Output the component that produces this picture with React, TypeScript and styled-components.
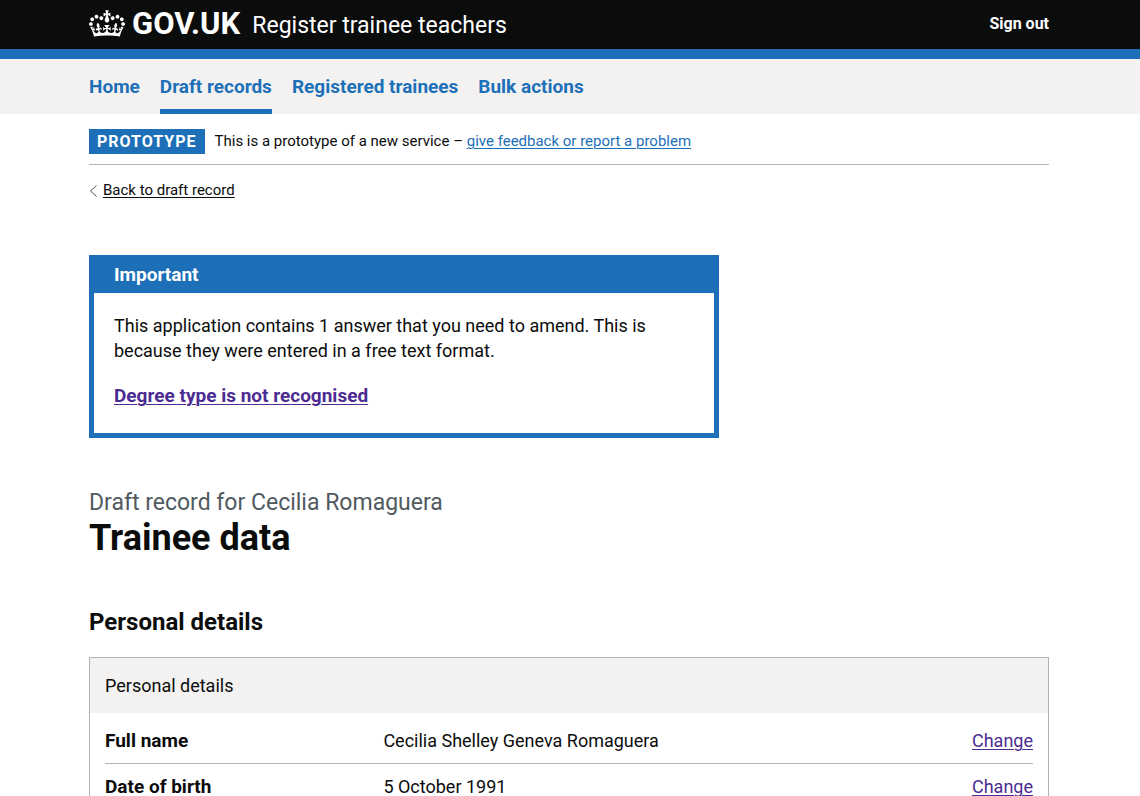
import React from "react";
import styled, { createGlobalStyle } from "styled-components";

const blue = "#1d70b8";
const ink = "#0b0c0c";
const visited = "#4c2c92";
const pale = "#f3f2f1";
const line = "#b1b4b6";

const GlobalStyle = createGlobalStyle`
  *, *::before, *::after { box-sizing: border-box; }
  body {
    margin: 0;
    background: #fff;
    color: ${ink};
    font-family: Roboto, "Noto Sans", sans-serif;
    font-size: 18px;
    line-height: 25px;
  }
  h1, h2, h3, p, ul, dl, dd, dt { margin: 0; padding: 0; }
`;

const Bar = styled.div<{ $bg?: string }>`
  padding: 0 32px 0 30px;
  background: ${(p) => p.$bg || "transparent"};
`;

const Container = styled.div`
  max-width: 960px;
  margin: 0 auto;
`;

const Masthead = styled.header`
  background: ${ink};
  border-bottom: 10px solid ${blue};
`;

const MastheadRow = styled(Container)`
  display: flex;
  align-items: center;
  height: 49px;
  padding-bottom: 2px;
`;

const LogoLink = styled.a`
  display: flex;
  align-items: center;
  color: #fff;
  text-decoration: none;
  font-size: 31px;
  font-weight: 700;
  line-height: 30px;
`;

const Crown = styled.svg`
  width: 36px;
  height: 27px;
  margin-right: 7px;
`;

const ServiceLink = styled.a`
  margin: 4px auto 0 12px;
  color: #fff;
  font-size: 23px;
  line-height: 30px;
  text-decoration: none;
`;

const SignOut = styled.a`
  color: #fff;
  font-size: 16px;
  font-weight: 700;
  text-decoration: none;
`;

const NavList = styled.ul`
  display: flex;
  gap: 20px;
  list-style: none;
`;

const NavLink = styled.a<{ $current?: boolean }>`
  display: block;
  padding: 15px 0 10px;
  border-bottom: 5px solid ${(p) => (p.$current ? blue : "transparent")};
  color: ${blue};
  font-size: 19px;
  font-weight: 700;
  text-decoration: none;
`;

const PhaseBanner = styled.div`
  display: flex;
  align-items: center;
  padding: 15px 0 10px;
  border-bottom: 1px solid ${line};
  font-size: 15px;
`;

const Tag = styled.strong`
  margin-right: 10px;
  padding: 0 8px;
  background: ${blue};
  color: #fff;
  font-size: 16px;
  letter-spacing: 1px;
`;

const Link = styled.a<{ $color?: string }>`
  color: ${(p) => p.$color || blue};
  text-decoration: underline;
  text-decoration-thickness: 1px;
  text-underline-offset: 2px;
`;

const BackRow = styled.div`
  display: flex;
  align-items: center;
  gap: 5px;
  margin-top: 13px;
  font-size: 15px;
`;

const Chevron = styled.svg`
  width: 9px;
  height: 12px;
`;

const Notice = styled.section`
  max-width: 630px;
  margin-top: 52px;
  border: 5px solid ${blue};
`;

const NoticeTitle = styled.h2`
  padding: 2px 20px 6px;
  background: ${blue};
  color: #fff;
  font-size: 19px;
  line-height: 25px;
`;

const NoticeBody = styled.div`
  display: grid;
  gap: 20px;
  padding: 20px 20px 25px;
`;

const NoticeIssue = styled.p`
  font-size: 19px;
  font-weight: 700;
`;

const Caption = styled.span`
  display: block;
  color: #505a5f;
  font-size: 23px;
  font-weight: 400;
  line-height: 30px;
`;

const Title = styled.h1`
  margin-top: 50px;
  font-size: 36px;
  line-height: 40px;
`;

const SectionTitle = styled.h2`
  margin: 49px 0 20px;
  font-size: 24px;
  line-height: 30px;
`;

const Card = styled.section`
  border: 1px solid ${line};
`;

const CardTitle = styled.h3`
  padding: 15px;
  background: ${pale};
  font-size: 18px;
  font-weight: 400;
  line-height: 25px;
`;

const SummaryList = styled.dl`
  padding: 5px 15px;
`;

const SummaryRow = styled.div`
  display: grid;
  grid-template-columns: 30% 50% 20%;
  padding: 10px 0;
  border-bottom: 1px solid ${line};
`;

const Key = styled.dt`
  font-size: 19px;
  font-weight: 700;
`;

const Action = styled.dd`
  text-align: right;
`;

const nav = ["Home", "Draft records", "Registered trainees", "Bulk actions"];

const details = [
  { key: "Full name", value: "Cecilia Shelley Geneva Romaguera" },
  { key: "Date of birth", value: "5 October 1991" },
];

const crownPath =
  "M25 30.2c3.5 1.5 7.7-.2 9.1-3.7 1.5-3.6-.2-7.8-3.9-9.2-3.6-1.4-7.6.3-9.1 3.9-1.4 3.5.3 7.5 3.9 9zM9 39.5c3.6 1.5 7.8-.2 9.2-3.7 1.5-3.6-.2-7.8-3.9-9.1-3.6-1.5-7.6.2-9.1 3.8-1.4 3.5.3 7.5 3.8 9zM4.4 57.2c3.5 1.5 7.7-.2 9.1-3.8 1.5-3.6-.2-7.7-3.9-9.1-3.5-1.5-7.6.3-9.1 3.8-1.4 3.5.3 7.6 3.9 9.1zm38.3-21.4c3.5 1.5 7.7-.2 9.1-3.8 1.5-3.6-.2-7.7-3.9-9.1-3.6-1.5-7.6.3-9.1 3.8-1.3 3.6.4 7.7 3.9 9.1zm64.4-5.6c-3.6 1.5-7.8-.2-9.1-3.7-1.5-3.6.2-7.8 3.8-9.2 3.6-1.4 7.7.3 9.2 3.9 1.3 3.5-.4 7.5-3.9 9zm15.9 9.3c-3.6 1.5-7.7-.2-9.1-3.7-1.5-3.6.2-7.8 3.7-9.1 3.6-1.5 7.7.2 9.2 3.8 1.5 3.5-.3 7.5-3.8 9zm4.7 17.7c-3.6 1.5-7.8-.2-9.2-3.8-1.5-3.6.2-7.7 3.9-9.1 3.6-1.5 7.7.3 9.2 3.8 1.3 3.5-.4 7.6-3.9 9.1zM89.3 35.8c-3.6 1.5-7.8-.2-9.2-3.8-1.4-3.6.2-7.7 3.9-9.1 3.6-1.5 7.7.3 9.2 3.8 1.4 3.6-.3 7.7-3.9 9.1zM69.7 17.7l8.9 4.7V9.3l-8.9 2.8c-.2-.3-.5-.6-.9-.9L72.4 0H59.6l3.5 11.2c-.3.3-.6.5-.9.9l-8.8-2.8v13.1l8.8-4.7c.3.3.6.7.9.9l-5 15.4v.1c-.2.8-.4 1.6-.4 2.4 0 4.1 3.1 7.5 7 8.1h.2c.3 0 .7.1 1 .1.4 0 .7 0 1-.1h.2c4-.6 7.1-4.1 7.1-8.1 0-.8-.1-1.7-.4-2.4V34l-5.1-15.4c.4-.2.7-.6 1-.9zM66 92.8c16.9 0 32.8 1.1 47.1 3.2 4-16.9 8.9-26.7 14-33.5l-9.6-3.4c1 4.9 1.1 7.2 0 10.2-1.5-1.4-3-4.3-4.2-8.7L108.6 76c2.8-2 5-3.2 7.5-3.3-4.4 9.4-10 11.9-13.6 11.2-4.3-.8-6.3-4.6-5.6-7.9 1-4.7 5.7-5.9 8-.5 4.3-8.7-3-11.4-7.6-8.8 7.1-7.2 7.9-13.5 2.1-21.1-8 6.1-8.1 12.3-4.5 20.8-4.7-5.4-12.1-2.5-9.5 6.2 3.4-5.2 7.9-2 7.2 3.1-.6 4.3-6.4 7.8-13.5 7.2-10.3-.9-10.9-8-11.2-13.8 2.5-.5 7.1 1.8 11 7.3L80.2 60c-4.1 4.4-8 5.3-12.3 5.4 1.4-4.4 8-11.6 8-11.6H55.5s6.4 7.2 7.9 11.6c-4.2-.1-8-1-12.3-5.4l1.4 16.4c3.9-5.5 8.5-7.7 10.9-7.3-.3 5.8-.9 12.8-11.1 13.8-7.2.6-12.9-2.9-13.5-7.2-.7-5 3.8-8.3 7.1-3.1 2.7-8.7-4.6-11.6-9.4-6.2 3.7-8.5 3.6-14.7-4.6-20.8-5.8 7.6-5 13.9 2.2 21.1-4.7-2.6-11.9.1-7.7 8.8 2.3-5.5 7.1-4.2 8.1.5.7 3.3-1.3 7.1-5.7 7.9-3.5.7-9-1.8-13.5-11.2 2.5.1 4.7 1.3 7.5 3.3l-4.7-15.4c-1.2 4.4-2.7 7.2-4.3 8.7-1.1-3-.9-5.3 0-10.2l-9.5 3.4c5 6.9 9.9 16.7 14 33.5 14.8-2.1 30.8-3.2 47.7-3.2z";

export default function App() {
  return (
    <>
      <GlobalStyle />
      <Masthead>
        <Bar>
          <MastheadRow>
            <LogoLink href="#">
              <Crown viewBox="0 0 132 97" fill="currentColor" aria-hidden="true">
                <path fillRule="evenodd" d={crownPath} />
              </Crown>
              GOV.UK
            </LogoLink>
            <ServiceLink href="#">Register trainee teachers</ServiceLink>
            <SignOut href="#">Sign out</SignOut>
          </MastheadRow>
        </Bar>
      </Masthead>
      <Bar as="nav" $bg={pale}>
        <Container>
          <NavList>
            {nav.map((label) => (
              <li key={label}>
                <NavLink href="#" $current={label === "Draft records"}>
                  {label}
                </NavLink>
              </li>
            ))}
          </NavList>
        </Container>
      </Bar>
      <Bar>
        <Container>
          <PhaseBanner>
            <Tag>PROTOTYPE</Tag>
            <p>
              This is a prototype of a new service –{" "}
              <Link href="#">give feedback or report a problem</Link>
            </p>
          </PhaseBanner>
          <BackRow>
            <Chevron viewBox="0 0 9 12" fill="none" stroke="#505a5f" aria-hidden="true">
              <path d="M7.500 0.500L1.500 6l6 5.500" />
            </Chevron>
            <Link href="#" $color={ink}>
              Back to draft record
            </Link>
          </BackRow>
          <main>
            <Notice>
              <NoticeTitle>Important</NoticeTitle>
              <NoticeBody>
                <p>
                  This application contains 1 answer that you need to amend. This is
                  because they were entered in a free text format.
                </p>
                <NoticeIssue>
                  <Link href="#" $color={visited}>
                    Degree type is not recognised
                  </Link>
                </NoticeIssue>
              </NoticeBody>
            </Notice>
            <Title>
              <Caption>Draft record for Cecilia Romaguera</Caption>
              Trainee data
            </Title>
            <SectionTitle>Personal details</SectionTitle>
            <Card>
              <CardTitle>Personal details</CardTitle>
              <SummaryList>
                {details.map((item) => (
                  <SummaryRow key={item.key}>
                    <Key>{item.key}</Key>
                    <dd>{item.value}</dd>
                    <Action>
                      <Link href="#" $color={visited}>
                        Change
                      </Link>
                    </Action>
                  </SummaryRow>
                ))}
              </SummaryList>
            </Card>
          </main>
        </Container>
      </Bar>
    </>
  );
}
